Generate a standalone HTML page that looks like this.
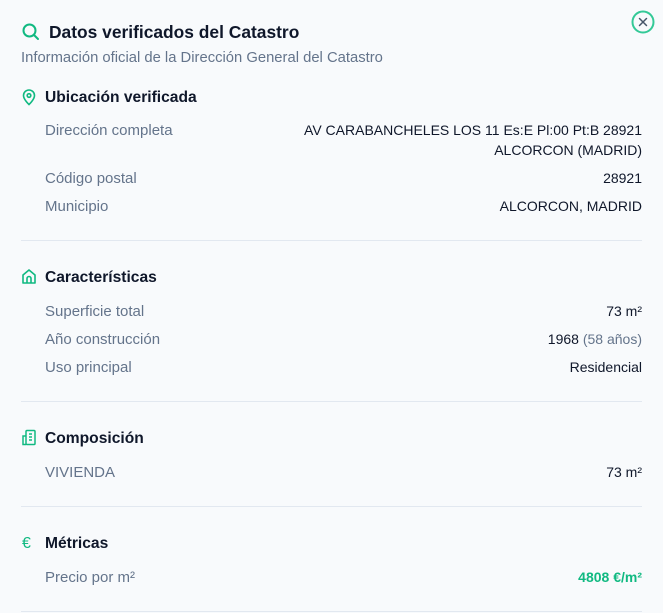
<!DOCTYPE html>
<html><head><meta charset="utf-8"><style>
body{margin:0;width:663px;height:613px;background:#f8fafc;font-family:"Liberation Sans",sans-serif;position:relative;overflow:hidden}
.a{position:absolute;white-space:nowrap;line-height:20px}
.t{left:49px;top:21px;font-size:17.4px;font-weight:bold;color:#0f172a;line-height:22px}
.s{left:21px;top:48px;font-size:14.8px;color:#64748b}
.h{left:45px;font-size:15.6px;font-weight:bold;color:#0f172a}
.l{left:45px;font-size:15px;color:#64748b;margin-top:1px}
.r{right:21px;font-size:14px;color:#0f172a;text-align:right}
.d{position:absolute;left:21px;right:21px;height:1px;background:#e2e8f0}
svg{position:absolute}
</style></head><body>
<svg style="left:21px;top:22px" width="20" height="20" viewBox="0 0 20 20" fill="none" stroke="#10b981" stroke-width="2" stroke-linecap="round"><circle cx="8.5" cy="8.5" r="6"/><path d="M13 13l4 4"/></svg>
<div class="a t">Datos verificados del Catastro</div>
<div class="a s">Información oficial de la Dirección General del Catastro</div>
<svg style="left:631px;top:10px" width="24" height="24" viewBox="0 0 24 24" fill="none"><circle cx="12" cy="12" r="10.5" stroke="#34c997" stroke-width="2" fill="#f8fafc"/><path d="M8.5 8.5l7 7M15.5 8.5l-7 7" stroke="#475569" stroke-width="1.5" stroke-linecap="round"/></svg>

<svg style="left:21px;top:88px" width="16" height="18" viewBox="0 0 16 18" fill="none" stroke="#10b981" stroke-width="1.6"><path d="M8 16.5s-5.5-5-5.5-9a5.5 5.5 0 0 1 11 0c0 4-5.5 9-5.5 9z"/><circle cx="8" cy="7.5" r="1.8"/></svg>
<div class="a h" style="top:88px">Ubicación verificada</div>
<div class="a l" style="top:120px">Dirección completa</div>
<div class="a r" style="top:120px">AV CARABANCHELES LOS 11 Es:E Pl:00 Pt:B 28921</div>
<div class="a r" style="top:140px">ALCORCON (MADRID)</div>
<div class="a l" style="top:168px">Código postal</div>
<div class="a r" style="top:168px">28921</div>
<div class="a l" style="top:196px">Municipio</div>
<div class="a r" style="top:196px">ALCORCON, MADRID</div>
<div class="d" style="top:240px"></div>

<svg style="left:21px;top:268px" width="16" height="17" viewBox="0 0 16 17" fill="none" stroke="#10b981" stroke-width="1.6" stroke-linejoin="round"><path d="M2 7l6-5 6 5v8H2z"/><path d="M6 15v-4.5a2 2 0 0 1 4 0V15"/></svg>
<div class="a h" style="top:268px">Características</div>
<div class="a l" style="top:301px">Superficie total</div>
<div class="a r" style="top:301px">73 m²</div>
<div class="a l" style="top:329px">Año construcción</div>
<div class="a r" style="top:329px">1968 <span style="color:#64748b">(58 años)</span></div>
<div class="a l" style="top:357px">Uso principal</div>
<div class="a r" style="top:357px">Residencial</div>
<div class="d" style="top:401px"></div>

<svg style="left:21px;top:429px" width="16" height="17" viewBox="0 0 16 17" fill="none" stroke="#10b981" stroke-width="1.5"><rect x="5" y="1.5" width="9" height="14" rx="1"/><path d="M5 7H2v8.5h3M8 5h3M8 8h3M8 11h3"/></svg>
<div class="a h" style="top:429px">Composición</div>
<div class="a l" style="top:462px">VIVIENDA</div>
<div class="a r" style="top:462px">73 m²</div>
<div class="d" style="top:506px"></div>

<div class="a" style="left:22px;top:534px;font-size:16px;color:#10b981">€</div>
<div class="a h" style="top:534px">Métricas</div>
<div class="a l" style="top:567px">Precio por m²</div>
<div class="a r" style="top:567px;color:#10b981;font-weight:bold">4808 €/m²</div>
<div class="d" style="top:611px"></div>
</body></html>
